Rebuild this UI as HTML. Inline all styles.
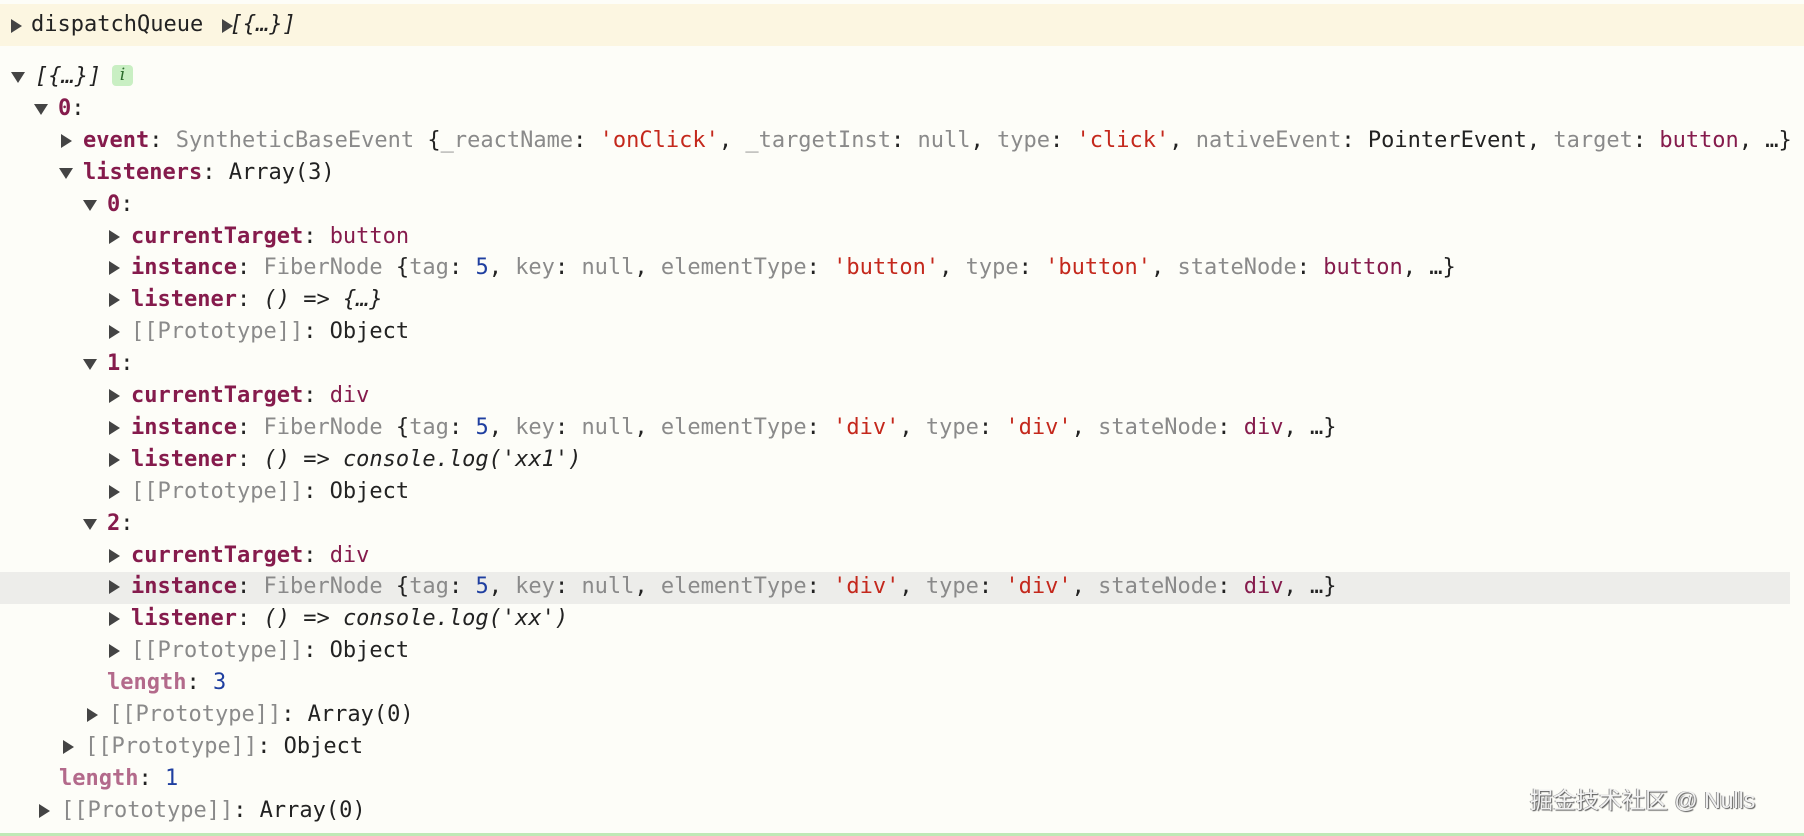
<!DOCTYPE html>
<html><head><meta charset="utf-8"><style>
body{margin:0;width:1804px;height:836px;background:#fdfdf8;position:relative;overflow:hidden;font-family:"DejaVu Sans Mono","Liberation Mono",monospace;font-size:22px;color:#222;}
.band{position:absolute;left:0;top:4px;width:1804px;height:42px;background:#fcf6e1;}
.r{position:absolute;height:32px;line-height:32px;white-space:pre;}
.a{position:absolute;width:0;height:0;}
.rt{border-top:7px solid transparent;border-bottom:7px solid transparent;border-left:11px solid #444;}
.dn{border-left:7px solid transparent;border-right:7px solid transparent;border-top:11px solid #444;}
.k{color:#851b4c;font-weight:bold}
.kl{color:#b36a8b;font-weight:bold}
.g{color:#8a8a8a}
.s{color:#c4281c}
.n{color:#1f3fa0}
.v{color:#851b4c}
.i{font-style:italic}
.hl{position:absolute;left:0;top:572px;width:1790px;height:32px;background:#ededea;}
.badge{position:absolute;left:112px;top:65px;width:21px;height:21px;background:#c9efc3;border-radius:4px;color:#2b6b2b;font-style:italic;font-size:17px;line-height:21px;text-align:center;font-family:"DejaVu Serif",serif;}
.wm{position:absolute;left:1530px;top:781px;font-family:"Liberation Sans","Noto Sans CJK SC",sans-serif;font-size:23px;color:#f2f2f2;text-shadow:1px 1px 1px #555,-1px 0 0 #999;}
.gl{position:absolute;left:0;top:833px;width:1804px;height:3px;background:#bfe9b6;}
</style></head><body>
<div class="band"></div>
<div class="hl"></div>
<div class="a rt" style="left:11px;top:19px"></div>
<div class="r" style="left:31px;top:9px">dispatchQueue  <span class="i">[{…}]</span></div>
<div class="a rt" style="left:222px;top:19px"></div>

<div id="rows"></div>
<div class="badge">i</div>
<div class="wm">掘金技术社区 @ Nulls</div>
<div class="gl"></div>
<script>
var rows=[
[0,'d',35,'<span class="i">[{…}]</span>'],
[1,'d',58,'<span class="k">0</span>:'],
[2,'r',83,'<span class="k">event</span>: <span class="g">SyntheticBaseEvent</span> {<span class="g">_reactName</span>: <span class="s">\'onClick\'</span>, <span class="g">_targetInst</span>: <span class="g">null</span>, <span class="g">type</span>: <span class="s">\'click\'</span>, <span class="g">nativeEvent</span>: PointerEvent, <span class="g">target</span>: <span class="v">button</span>, …}'],
[3,'d',83,'<span class="k">listeners</span>: Array(3)'],
[4,'d',107,'<span class="k">0</span>:'],
[5,'r',131,'<span class="k">currentTarget</span>: <span class="v">button</span>'],
[6,'r',131,'<span class="k">instance</span>: <span class="g">FiberNode</span> {<span class="g">tag</span>: <span class="n">5</span>, <span class="g">key</span>: <span class="g">null</span>, <span class="g">elementType</span>: <span class="s">\'button\'</span>, <span class="g">type</span>: <span class="s">\'button\'</span>, <span class="g">stateNode</span>: <span class="v">button</span>, …}'],
[7,'r',131,'<span class="k">listener</span>: <span class="i">() =&gt; {…}</span>'],
[8,'r',131,'<span class="g">[[Prototype]]</span>: Object'],
[9,'d',107,'<span class="k">1</span>:'],
[10,'r',131,'<span class="k">currentTarget</span>: <span class="v">div</span>'],
[11,'r',131,'<span class="k">instance</span>: <span class="g">FiberNode</span> {<span class="g">tag</span>: <span class="n">5</span>, <span class="g">key</span>: <span class="g">null</span>, <span class="g">elementType</span>: <span class="s">\'div\'</span>, <span class="g">type</span>: <span class="s">\'div\'</span>, <span class="g">stateNode</span>: <span class="v">div</span>, …}'],
[12,'r',131,'<span class="k">listener</span>: <span class="i">() =&gt; console.log(\'xx1\')</span>'],
[13,'r',131,'<span class="g">[[Prototype]]</span>: Object'],
[14,'d',107,'<span class="k">2</span>:'],
[15,'r',131,'<span class="k">currentTarget</span>: <span class="v">div</span>'],
[16,'r',131,'<span class="k">instance</span>: <span class="g">FiberNode</span> {<span class="g">tag</span>: <span class="n">5</span>, <span class="g">key</span>: <span class="g">null</span>, <span class="g">elementType</span>: <span class="s">\'div\'</span>, <span class="g">type</span>: <span class="s">\'div\'</span>, <span class="g">stateNode</span>: <span class="v">div</span>, …}'],
[17,'r',131,'<span class="k">listener</span>: <span class="i">() =&gt; console.log(\'xx\')</span>'],
[18,'r',131,'<span class="g">[[Prototype]]</span>: Object'],
[19,'',107,'<span class="kl">length</span>: <span class="n">3</span>'],
[20,'r',109,'<span class="g">[[Prototype]]</span>: Array(0)'],
[21,'r',85,'<span class="g">[[Prototype]]</span>: Object'],
[22,'',59,'<span class="kl">length</span>: <span class="n">1</span>'],
[23,'r',61,'<span class="g">[[Prototype]]</span>: Array(0)']
];
var h='';
rows.forEach(function(r){
 var cy=77+31.9*r[0], top=Math.round(cy-16);
 h+='<div class="r" style="left:'+r[2]+'px;top:'+top+'px">'+r[3]+'</div>';
 if(r[1]=='r') h+='<div class="a rt" style="left:'+(r[2]-22)+'px;top:'+Math.round(cy-7)+'px"></div>';
 if(r[1]=='d') h+='<div class="a dn" style="left:'+(r[2]-24)+'px;top:'+Math.round(cy-5)+'px"></div>';
});
document.getElementById('rows').innerHTML=h;
</script>
</body></html>
